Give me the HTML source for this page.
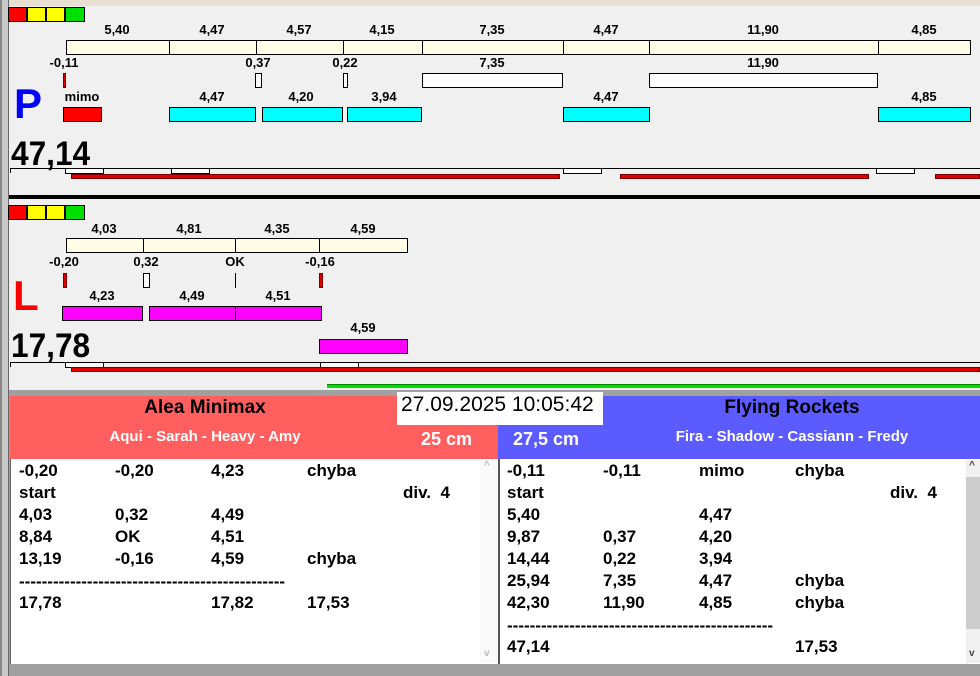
<!DOCTYPE html>
<html><head><meta charset="utf-8"><style>
*{margin:0;padding:0;box-sizing:border-box}
body{width:980px;height:676px;overflow:hidden;background:#a0a0a0;position:relative;font-family:"Liberation Sans",Arial,sans-serif;font-weight:bold;color:#000}
div,span{position:absolute}
.b{border:1px solid #000}
.c{background:#fffde6}
.w{background:#fff}
.cy{background:#00ffff}
.mg{background:#ff00ff}
.r{background:#ff0000}
.rd{background:#e00000;border:1px solid #700}
.t{font-size:13px;transform:translateX(-50%);white-space:nowrap}
.big{font-size:34px;transform:scaleX(0.93);transform-origin:0 0;white-space:nowrap}
.lst{font-size:17px;line-height:22px}
</style></head><body>
<div style="left:0;top:0;width:980px;height:6px;background:#e8e0d0"></div>
<div style="left:0;top:0;width:9px;height:676px;background:#c8c8c8;border-left:2px solid #888;border-right:1px solid #666"></div>
<div style="left:9px;top:6px;width:971px;height:384px;background:#f0f0f0"></div>

<!-- P section -->
<div style="left:8px;top:7px;width:19px;height:15px" class="b r"></div>
<div style="left:27px;top:7px;width:19px;height:15px;background:#ffff00" class="b"></div>
<div style="left:46px;top:7px;width:19px;height:15px;background:#ffff00" class="b"></div>
<div style="left:65px;top:7px;width:20px;height:15px;background:#00e000" class="b"></div>

<span class="t" style="left:117px;top:22px">5,40</span>
<span class="t" style="left:212px;top:22px">4,47</span>
<span class="t" style="left:299px;top:22px">4,57</span>
<span class="t" style="left:382px;top:22px">4,15</span>
<span class="t" style="left:492px;top:22px">7,35</span>
<span class="t" style="left:606px;top:22px">4,47</span>
<span class="t" style="left:763px;top:22px">11,90</span>
<span class="t" style="left:924px;top:22px">4,85</span>
<div class="b c" style="left:66px;top:40px;width:104px;height:15px"></div>
<div class="b c" style="left:169px;top:40px;width:88px;height:15px"></div>
<div class="b c" style="left:256px;top:40px;width:88px;height:15px"></div>
<div class="b c" style="left:343px;top:40px;width:80px;height:15px"></div>
<div class="b c" style="left:422px;top:40px;width:142px;height:15px"></div>
<div class="b c" style="left:563px;top:40px;width:87px;height:15px"></div>
<div class="b c" style="left:649px;top:40px;width:230px;height:15px"></div>
<div class="b c" style="left:878px;top:40px;width:93px;height:15px"></div>

<span class="t" style="left:64px;top:55px">-0,11</span>
<span class="t" style="left:258px;top:55px">0,37</span>
<span class="t" style="left:345px;top:55px">0,22</span>
<span class="t" style="left:492px;top:55px">7,35</span>
<span class="t" style="left:763px;top:55px">11,90</span>
<div class="rd" style="left:63px;top:73px;width:3px;height:15px"></div>
<div class="b w" style="left:255px;top:73px;width:7px;height:15px"></div>
<div class="b w" style="left:343px;top:73px;width:5px;height:15px"></div>
<div class="b w" style="left:422px;top:73px;width:141px;height:15px"></div>
<div class="b w" style="left:649px;top:73px;width:229px;height:15px"></div>

<span style="left:14px;top:80px;font-size:42px;color:#0000ff">P</span>
<span class="t" style="left:82px;top:89px">mimo</span>
<span class="t" style="left:212px;top:89px">4,47</span>
<span class="t" style="left:301px;top:89px">4,20</span>
<span class="t" style="left:384px;top:89px">3,94</span>
<span class="t" style="left:606px;top:89px">4,47</span>
<span class="t" style="left:924px;top:89px">4,85</span>
<div class="b r" style="left:63px;top:107px;width:39px;height:15px"></div>
<div class="b cy" style="left:169px;top:107px;width:87px;height:15px"></div>
<div class="b cy" style="left:262px;top:107px;width:81px;height:15px"></div>
<div class="b cy" style="left:347px;top:107px;width:75px;height:15px"></div>
<div class="b cy" style="left:563px;top:107px;width:87px;height:15px"></div>
<div class="b cy" style="left:878px;top:107px;width:93px;height:15px"></div>

<span class="big" style="left:11px;top:135px">47,14</span>
<div style="left:10px;top:168px;width:970px;height:1px;background:#000"></div>
<div style="left:10px;top:168px;width:1px;height:5px;background:#000"></div>
<div class="b w" style="left:65px;top:168px;width:39px;height:6px"></div>
<div class="b w" style="left:171px;top:168px;width:39px;height:6px"></div>
<div class="b w" style="left:563px;top:168px;width:39px;height:6px"></div>
<div class="b w" style="left:876px;top:168px;width:39px;height:6px"></div>
<div class="rd" style="left:71px;top:174px;width:489px;height:5px"></div>
<div class="rd" style="left:620px;top:174px;width:249px;height:5px"></div>
<div class="rd" style="left:935px;top:174px;width:45px;height:5px"></div>

<div style="left:9px;top:195px;width:971px;height:4px;background:#000"></div>

<!-- L section -->
<div style="left:8px;top:205px;width:19px;height:15px" class="b r"></div>
<div style="left:27px;top:205px;width:19px;height:15px;background:#ffff00" class="b"></div>
<div style="left:46px;top:205px;width:19px;height:15px;background:#ffff00" class="b"></div>
<div style="left:65px;top:205px;width:20px;height:15px;background:#00e000" class="b"></div>

<span class="t" style="left:104px;top:221px">4,03</span>
<span class="t" style="left:189px;top:221px">4,81</span>
<span class="t" style="left:277px;top:221px">4,35</span>
<span class="t" style="left:363px;top:221px">4,59</span>
<div class="b c" style="left:66px;top:238px;width:78px;height:15px"></div>
<div class="b c" style="left:143px;top:238px;width:93px;height:15px"></div>
<div class="b c" style="left:235px;top:238px;width:85px;height:15px"></div>
<div class="b c" style="left:319px;top:238px;width:89px;height:15px"></div>

<span class="t" style="left:64px;top:254px">-0,20</span>
<span class="t" style="left:146px;top:254px">0,32</span>
<span class="t" style="left:235px;top:254px">OK</span>
<span class="t" style="left:320px;top:254px">-0,16</span>
<div class="rd" style="left:63px;top:273px;width:4px;height:15px"></div>
<div class="b w" style="left:143px;top:273px;width:7px;height:15px"></div>
<div style="left:235px;top:273px;width:1px;height:15px;background:#000"></div>
<div class="rd" style="left:319px;top:273px;width:4px;height:15px"></div>

<span style="left:13px;top:272px;font-size:42px;color:#ff0000">L</span>
<span class="t" style="left:102px;top:288px">4,23</span>
<span class="t" style="left:192px;top:288px">4,49</span>
<span class="t" style="left:278px;top:288px">4,51</span>
<div class="b mg" style="left:62px;top:306px;width:81px;height:15px"></div>
<div class="b mg" style="left:149px;top:306px;width:87px;height:15px"></div>
<div class="b mg" style="left:235px;top:306px;width:87px;height:15px"></div>
<span class="t" style="left:363px;top:320px">4,59</span>
<div class="b mg" style="left:319px;top:339px;width:89px;height:15px"></div>

<span class="big" style="left:11px;top:327px">17,78</span>
<div style="left:10px;top:362px;width:970px;height:1px;background:#000"></div>
<div style="left:10px;top:362px;width:1px;height:5px;background:#000"></div>
<div class="b w" style="left:65px;top:362px;width:39px;height:6px"></div>
<div class="b w" style="left:320px;top:362px;width:39px;height:6px"></div>
<div class="rd" style="left:71px;top:367px;width:909px;height:5px"></div>
<div style="left:327px;top:384px;width:653px;height:4px;background:#00e000;border-top:1px solid #080"></div>

<!-- bottom -->
<div style="left:10px;top:396px;width:488px;height:63px;background:#ff5f5f"></div>
<div style="left:498px;top:396px;width:482px;height:63px;background:#5b5bff"></div>
<span class="t" style="left:205px;top:397px;font-size:19px">Alea Minimax</span>
<span class="t" style="left:205px;top:428px;font-size:15px;color:#fff">Aqui - Sarah - Heavy - Amy</span>
<span style="left:421px;top:429px;font-size:18px;color:#fff">25 cm</span>
<span style="left:513px;top:429px;font-size:18px;color:#fff">27,5 cm</span>
<span class="t" style="left:792px;top:397px;font-size:19px">Flying Rockets</span>
<span class="t" style="left:792px;top:428px;font-size:15px;color:#fff">Fira - Shadow - Cassiann - Fredy</span>
<div style="left:397px;top:392px;width:206px;height:33px;background:#fff"></div>
<span style="left:401px;top:393px;font-size:21px;font-weight:normal;white-space:nowrap">27.09.2025 10:05:42</span>

<div style="left:10px;top:459px;width:488px;height:205px;background:#fff;border-left:1px solid #666"></div>
<div style="left:480px;top:460px;width:17px;height:203px;background:#fafafa"></div>
<span style="left:484px;top:460px;font-size:10px;color:#bbb">^</span>
<span style="left:484px;top:648px;font-size:10px;color:#bbb">v</span>
<div style="left:498px;top:459px;width:482px;height:205px;background:#fff;border-left:2px solid #555"></div>
<div style="left:966px;top:460px;width:14px;height:203px;background:#f0f0f0"></div>
<div style="left:966px;top:477px;width:14px;height:152px;background:#cdcdcd"></div>
<span style="left:969px;top:460px;font-size:10px;color:#444">^</span>
<span style="left:969px;top:648px;font-size:10px;color:#444">v</span>

<div class="lst" style="left:19px;top:460px;width:460px;height:200px">
<span style="left:0;top:0">-0,20</span><span style="left:96px;top:0">-0,20</span><span style="left:192px;top:0">4,23</span><span style="left:288px;top:0">chyba</span>
<span style="left:0;top:22px">start</span><span style="left:384px;top:22px">div.&nbsp; 4</span>
<span style="left:0;top:44px">4,03</span><span style="left:96px;top:44px">0,32</span><span style="left:192px;top:44px">4,49</span>
<span style="left:0;top:66px">8,84</span><span style="left:96px;top:66px">OK</span><span style="left:192px;top:66px">4,51</span>
<span style="left:0;top:88px">13,19</span><span style="left:96px;top:88px">-0,16</span><span style="left:192px;top:88px">4,59</span><span style="left:288px;top:88px">chyba</span>
<span style="left:0;top:111px;white-space:nowrap">-----------------------------------------------</span>
<span style="left:0;top:132px">17,78</span><span style="left:192px;top:132px">17,82</span><span style="left:288px;top:132px">17,53</span>
</div>
<div class="lst" style="left:507px;top:460px;width:455px;height:200px">
<span style="left:0;top:0">-0,11</span><span style="left:96px;top:0">-0,11</span><span style="left:192px;top:0">mimo</span><span style="left:288px;top:0">chyba</span>
<span style="left:0;top:22px">start</span><span style="left:383px;top:22px">div.&nbsp; 4</span>
<span style="left:0;top:44px">5,40</span><span style="left:192px;top:44px">4,47</span>
<span style="left:0;top:66px">9,87</span><span style="left:96px;top:66px">0,37</span><span style="left:192px;top:66px">4,20</span>
<span style="left:0;top:88px">14,44</span><span style="left:96px;top:88px">0,22</span><span style="left:192px;top:88px">3,94</span>
<span style="left:0;top:110px">25,94</span><span style="left:96px;top:110px">7,35</span><span style="left:192px;top:110px">4,47</span><span style="left:288px;top:110px">chyba</span>
<span style="left:0;top:132px">42,30</span><span style="left:96px;top:132px">11,90</span><span style="left:192px;top:132px">4,85</span><span style="left:288px;top:132px">chyba</span>
<span style="left:0;top:155px;white-space:nowrap">-----------------------------------------------</span>
<span style="left:0;top:176px">47,14</span><span style="left:288px;top:176px">17,53</span>
</div>
</body></html>
